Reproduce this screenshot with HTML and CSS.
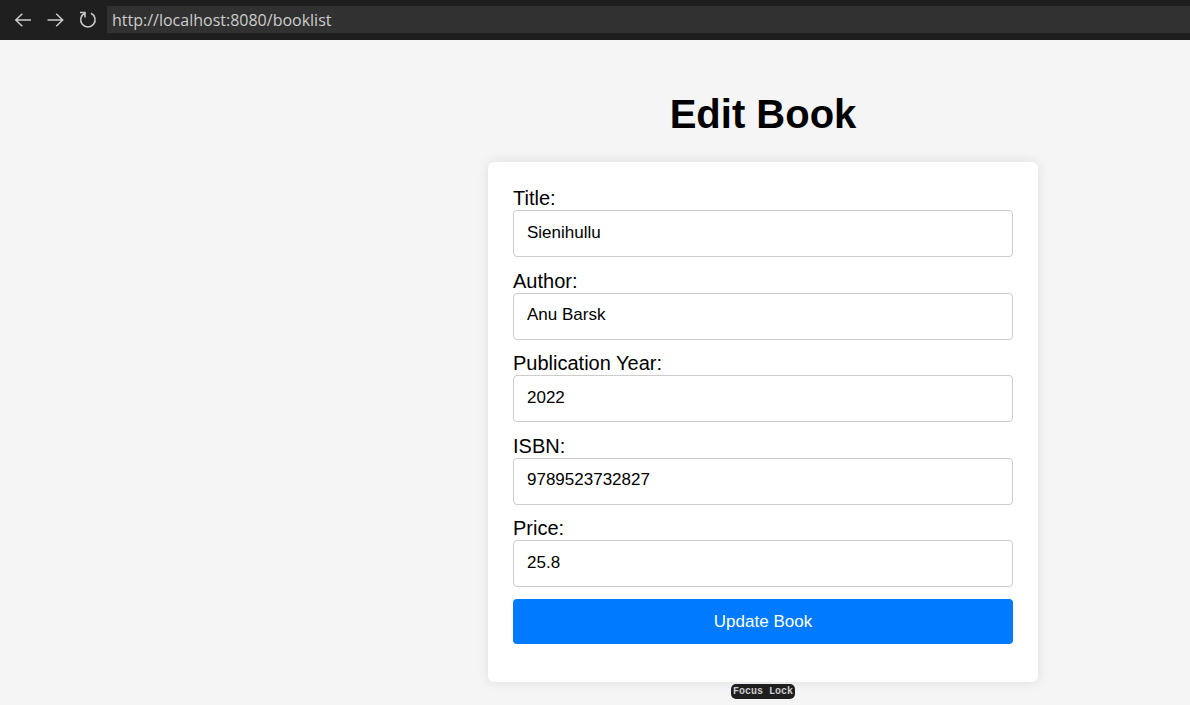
FILE: index.html
```html
<!DOCTYPE html>
<html lang="en">
<head>
<meta charset="utf-8">
<title>Edit Book</title>
<link rel="stylesheet" href="styles.css">
</head>
<body>
<header class="toolbar">
  <button class="nav-button" type="button" aria-label="Back">
    <svg class="icon" viewBox="0 0 20 20"><path d="M18 10H2.800M9.300 3.800 2.800 10l6.500 6.200"/></svg>
  </button>
  <button class="nav-button" type="button" aria-label="Forward">
    <svg class="icon" viewBox="0 0 20 20"><path d="M2.500 10h15.200M11.200 3.800 17.700 10l-6.500 6.200"/></svg>
  </button>
  <button class="nav-button" type="button" aria-label="Reload">
    <svg class="icon" viewBox="0 0 20 20"><path d="M3 2.500h5v5M7.800 3.200A7.200 7.200 0 1 0 14 3.200"/></svg>
  </button>
  <input class="address" type="text" aria-label="Address" value="http://localhost:8080/booklist">
</header>
<main class="page">
  <h1 class="heading">Edit Book</h1>
  <form class="card">
    <div class="fields">
      <div class="field"><label class="label" for="title">Title:</label><input class="input" id="title" type="text" value="Sienihullu"></div>
      <div class="field"><label class="label" for="author">Author:</label><input class="input" id="author" type="text" value="Anu Barsk"></div>
      <div class="field"><label class="label" for="year">Publication Year:</label><input class="input" id="year" type="text" value="2022"></div>
      <div class="field"><label class="label" for="isbn">ISBN:</label><input class="input" id="isbn" type="text" value="9789523732827"></div>
      <div class="field"><label class="label" for="price">Price:</label><input class="input" id="price" type="text" value="25.8"></div>
    </div>
    <button class="submit" type="button">Update Book</button>
  </form>
  <span class="badge">Focus Lock</span>
</main>
</body>
</html>
```
FILE: styles.css
```css
* { box-sizing: border-box; }

body {
  margin: 0;
  background: #f5f5f5;
  color: #000;
  font-family: "Liberation Sans", Arial, sans-serif;
}

.toolbar {
  display: flex;
  align-items: center;
  height: 40px;
  padding: 6px 0 7px 7px;
  background: #1f1f1f;
}

.nav-button {
  display: flex;
  align-items: center;
  justify-content: center;
  flex: none;
  width: 32px;
  height: 27px;
  margin: 0;
  padding: 0;
  border: 0;
  background: none;
  color: #ccc;
}

.icon {
  width: 20px;
  height: 20px;
  fill: none;
  stroke: currentColor;
  stroke-width: 1.5;
}

.address {
  flex: 1;
  min-width: 0;
  height: 27px;
  margin-left: 4px;
  padding: 0 5px;
  border: 0;
  background: #313131;
  color: #ccc;
  font: 16px "Open Sans", "Noto Sans", sans-serif;
}

.page {
  display: flex;
  flex-direction: column;
  align-items: center;
  padding: 51px 0 6px 336px;
}

.heading {
  margin: 0 0 25px;
  font-size: 40px;
  line-height: 46px;
}

.card {
  width: 100%;
  max-width: 550px;
  padding: 25px 25px 38px;
  border-radius: 6px;
  background: #fff;
  box-shadow: 0 0 12px rgba(0, 0, 0, 0.1);
}

.fields {
  display: flex;
  flex-direction: column;
  justify-content: space-between;
  min-height: 400px;
  margin-bottom: 12px;
}

.field {
  display: flex;
  flex-direction: column;
}

.label {
  align-self: flex-start;
  font-size: 20px;
  line-height: 23px;
}

.input {
  width: 100%;
  height: 47px;
  padding: 0 13px 2px;
  border: 1px solid #ccc;
  border-radius: 4px;
  background: #fff;
  color: #000;
  font: 17px "Liberation Sans", Arial, sans-serif;
}

.submit {
  display: block;
  width: 100%;
  height: 45px;
  padding: 0;
  border: 0;
  border-radius: 4px;
  background: #007bff;
  color: #fff;
  font: 17px "Liberation Sans", Arial, sans-serif;
}

.badge {
  margin-top: 2px;
  padding: 0 2px;
  border-radius: 5px;
  background: #1f1f1f;
  color: #ccc;
  font: bold 10px/15px "Liberation Mono", "Courier New", monospace;
}
```
